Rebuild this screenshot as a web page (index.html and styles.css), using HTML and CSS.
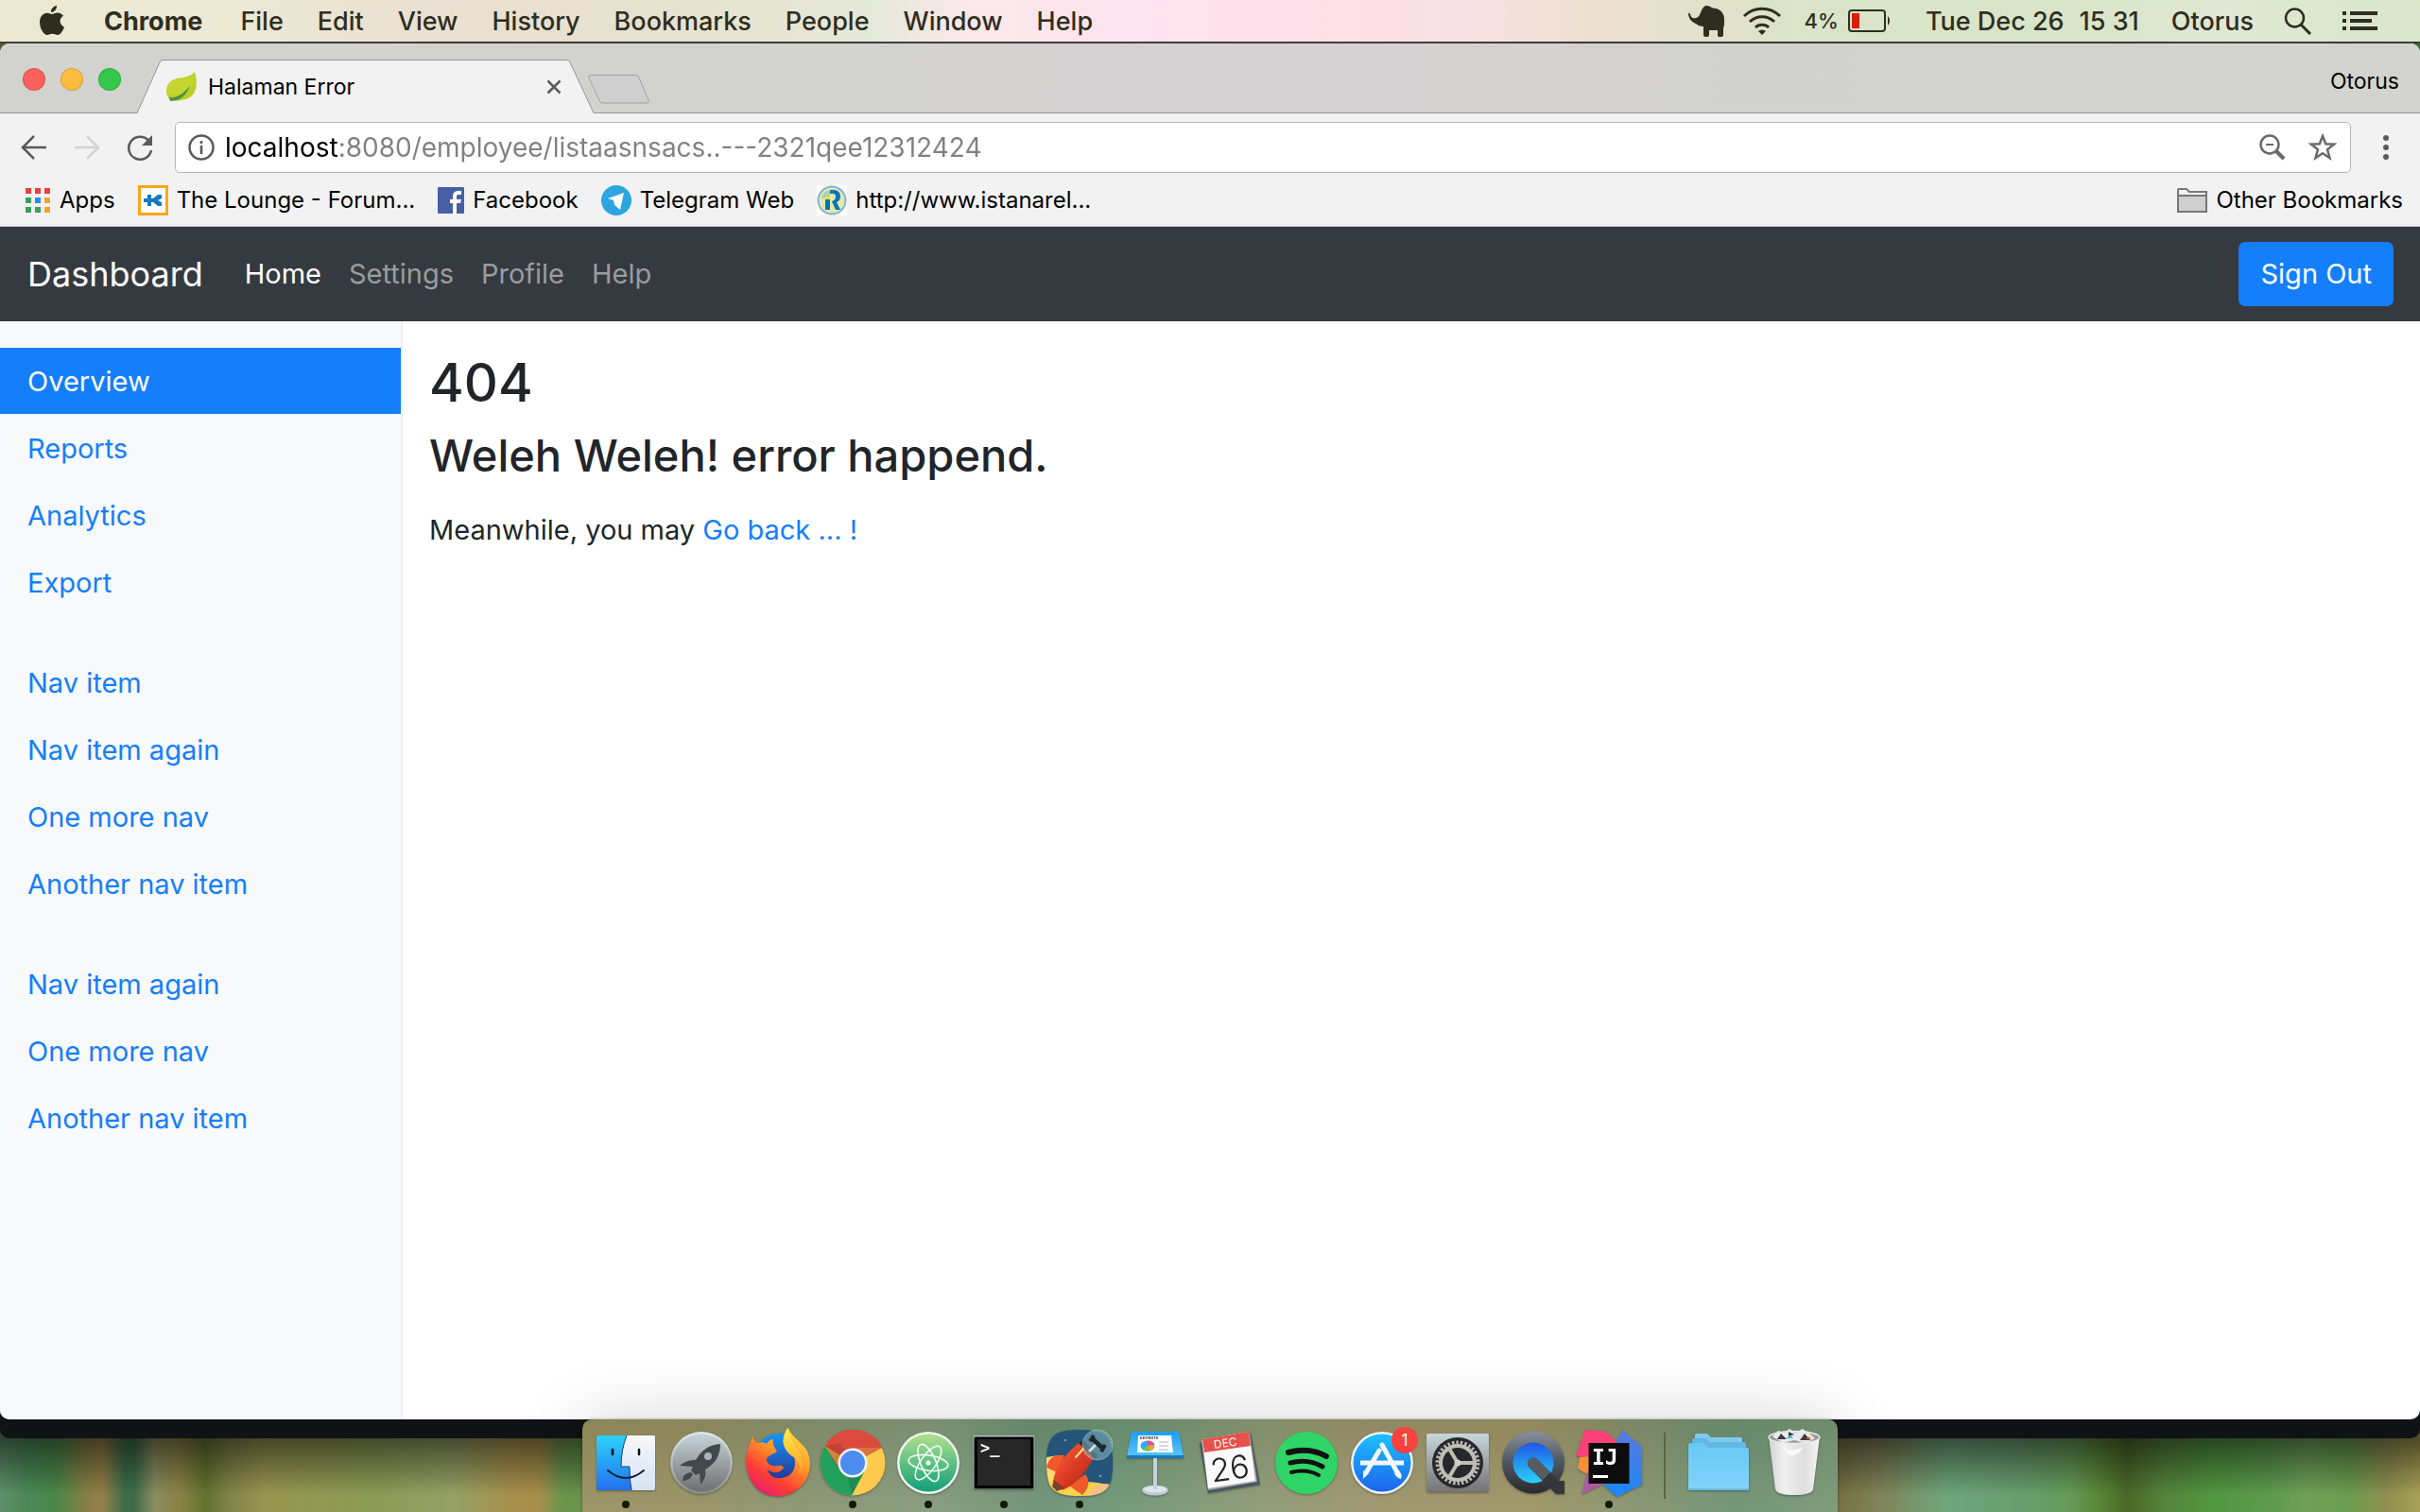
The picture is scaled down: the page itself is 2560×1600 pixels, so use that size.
FILE: index.html
```html
<!DOCTYPE html>
<html lang="en">
<head>
<meta charset="utf-8">
<title>Halaman Error</title>
<link rel="stylesheet" href="styles.css">
</head>
<body>
<div class="desktop">
  <header class="menubar">
    <nav class="menus" aria-label="Application menu">
      <button class="menu apple" aria-label="Apple"><svg width="28" height="34" viewBox="0 0 28 34"><path d="M19 1c.3 4-2.800 7-6 7C12.500 4.500 15.500 1.500 19 1zM14 10c1.500 0 3-1.500 6-1.500 2.500 0 4.800 1.300 6 3.300-5 3-4.300 9.500 1 11.700C25.500 27.500 23 32 20 32c-2 0-3-1.200-5.500-1.200S11 32 9 32C5 32 1 24.500 1 18.500 1 12 5 8.700 9 8.700c2.200 0 3.800 1.300 5 1.300z"/></svg></button>
      <button class="menu app-name">Chrome</button>
      <button class="menu">File</button>
      <button class="menu">Edit</button>
      <button class="menu">View</button>
      <button class="menu">History</button>
      <button class="menu">Bookmarks</button>
      <button class="menu">People</button>
      <button class="menu">Window</button>
      <button class="menu">Help</button>
    </nav>
    <div class="status">
      <svg class="elephant" width="40" height="34" viewBox="0 0 40 34"><path d="M1 9q1-1 2 1c1 4 3 5 6 4 4-1 4-4 6-8 2-5 5-6 9-4q3 2 6 2c6 1 9 6 9 12 0 5 0 7-1 9v7q0 2-2 2h-3q-1 0-1-2v-5h-9v5q0 2-2 2h-2q-2 0-2-2v-9c-3 0-6-1-8-3C4 18 1 14 1 9z"/></svg>
      <svg width="42" height="32" viewBox="0 0 42 32" fill="none" stroke="currentColor" stroke-width="3"><path d="M2 11a27 27 0 0 1 38 0M8 17a18.500 18.500 0 0 1 26 0M14 23a10 10 0 0 1 14 0"/><path d="M21 31l-4-4a6 6 0 0 1 8 0z" fill="currentColor" stroke="none"/></svg>
      <span class="battery"><span class="percent">4%</span>
      <svg width="46" height="26" viewBox="0 0 46 26"><rect x="1" y="2" width="38" height="22" rx="3" fill="none" stroke="currentColor" stroke-width="2"/><rect x="4" y="5" width="8" height="16" fill="#d81e05"/><path d="M42 8q4 5 0 10z"/></svg></span>
      <span class="clock"><span>Tue Dec 26</span><span>15 31</span></span>
      <span class="user">Otorus</span>
      <svg width="30" height="30" viewBox="0 0 30 30" fill="none" stroke="currentColor" stroke-width="2.500"><circle cx="11.500" cy="12" r="9.500"/><path d="M18 19l10 10" stroke-width="3"/></svg>
      <svg width="38" height="24" viewBox="0 0 38 24"><path d="M0 2h4v4H0zM8 2h29v4H8zM0 10h4v4H0zM8 10h23v4H8zM0 18h4v4H0zM8 18h29v4H8z"/></svg>
    </div>
  </header>

  <div class="workspace">
  <section class="window">
    <div class="titlebar">
      <div class="lights"><button class="light red" aria-label="Close window"></button><button class="light amber" aria-label="Minimise window"></button><button class="light green" aria-label="Zoom window"></button></div>
      <div class="tab">
        <svg class="tab-shape" width="486" height="57" viewBox="0 0 486 57"><path d="M0 56.500H1L25 3q1-2.500 4-2.500H455q3 0 4 2.500L484 56.500h2V57H0z" fill="#f2f2f2"/><path d="M0 56.500H1L25 3q1-2.500 4-2.500H455q3 0 4 2.500L484 56.500h2" fill="none" stroke="#949494"/></svg>
        <svg width="34" height="32" viewBox="0 0 34 32"><path d="M31 0c3 12 3 23-7 28-7 3-14 3-20 1C-2 20 1 10 12 7c8-1 15-2 19-7z" fill="#bccf22"/><path d="M30 4c1 8-3 15-10 18C14 25 8 25 3 23 0 14 5 9 13 8c8-1 13-1 17-4z" fill="#cbd936" opacity=".7"/><path d="M4 27c8 1 16-4 22-13-3 11-11 17-21 17z" fill="#4c9147"/></svg>
        <span class="tab-title">Halaman Error</span>
        <button class="tab-close" aria-label="Close tab"><svg width="16" height="16" viewBox="0 0 16 16"><path d="M1.500 1.500l13 13M14.500 1.500l-13 13" stroke="#5a5a5a" stroke-width="2.500"/></svg></button>
      </div>
      <button class="new-tab" aria-label="New tab"><svg width="66" height="32" viewBox="0 0 66 32"><path d="M4 .500h46q3 0 4 2.500l10 24q1 3-2 3H16q-3 0-4-2.500L1 3.500Q0 .500 4 .500z" fill="#cfcfcf" stroke="#a0a0a0"/></svg></button>
      <button class="profile">Otorus</button>
    </div>

    <div class="toolbar">
      <button class="tool" aria-label="Back"><svg width="28" height="28" viewBox="0 0 28 28" fill="none" stroke="#5a5a5a" stroke-width="2.500"><path d="M27 14H3M14 2L2 14l12 12"/></svg></button>
      <button class="tool" aria-label="Forward"><svg width="28" height="28" viewBox="0 0 28 28" fill="none" stroke="#d3d3d3" stroke-width="2.500"><path d="M1 14h24M14 2l12 12-12 12"/></svg></button>
      <button class="tool" aria-label="Reload"><svg width="28" height="28" viewBox="0 0 28 28" fill="none" stroke="#5a5a5a" stroke-width="2.500"><path d="M23 6.500A12 12 0 1 0 26 17"/><path d="M27 1v11H16z" fill="#5a5a5a" stroke="none"/></svg></button>
      <div class="omnibox">
        <svg width="28" height="28" viewBox="0 0 28 28"><circle cx="14" cy="14" r="12.500" fill="none" stroke="#5a5a5a" stroke-width="2.500"/><path d="M12.700 7h2.600v3h-2.600zM12.700 12h2.600v9h-2.600z" fill="#5a5a5a"/></svg>
        <input class="address" type="text" aria-label="Address" value="localhost:8080/employee/listaasnsacs..---2321qee12312424">
        <svg width="28" height="28" viewBox="0 0 28 28" fill="none" stroke="#6a6a6a" stroke-width="2.500"><circle cx="11" cy="11" r="9.500"/><path d="M17.500 17.500l8.500 8.500" stroke-width="4"/><path d="M7 11h8" stroke-width="2"/></svg>
        <svg width="30" height="30" viewBox="0 0 30 30"><path d="M15 3l3.200 8.300 8.800.400-7 5.500 2.500 9-7.500-5-7.500 5 2.500-9-7-5.500 8.800-.400z" fill="none" stroke="#6a6a6a" stroke-width="2.500"/></svg>
      </div>
      <button class="tool" aria-label="More"><svg width="8" height="28" viewBox="0 0 8 28" fill="#5a5a5a"><circle cx="4" cy="4" r="3"/><circle cx="4" cy="14" r="3"/><circle cx="4" cy="24" r="3"/></svg></button>
    </div>

    <nav class="bookmarks" aria-label="Bookmarks">
      <a class="bookmark" href="#"><svg width="28" height="28" viewBox="0 0 28 28"><path d="M1 1h6v6H1zM11 1h6v6h-6zM21 1h6v6h-6z" fill="#ef3f3b"/><path d="M1 11h6v6H1zM1 21h6v6H1zM11 21h6v6h-6z" fill="#38a05c"/><path d="M11 11h6v6h-6z" fill="#2a8cf3"/><path d="M21 11h6v6h-6zM21 21h6v6h-6z" fill="#f0a22b"/></svg>Apps</a>
      <a class="bookmark" href="#"><svg width="32" height="32" viewBox="0 0 32 32"><rect x="1.500" y="1.500" width="29" height="29" fill="#fff" stroke="#f9a61a" stroke-width="3"/><path d="M6 14h4v-4h4v4h2l5-4h4v4l-4 2 4 2v4h-4l-5-4h-2v4h-4v-4H6z" fill="#167ac2"/></svg>The Lounge - Forum...</a>
      <a class="bookmark" href="#"><svg width="28" height="28" viewBox="0 0 28 28"><rect width="28" height="28" rx="1" fill="#4760a5"/><path d="M16 28V17h-3v-4h3v-3c0-4 2-6 6-6h3v4h-3c-1.500 0-2 .500-2 2v3h5l-1 4h-4v11z" fill="#fff"/></svg>Facebook</a>
      <a class="bookmark" href="#"><svg width="32" height="32" viewBox="0 0 32 32"><circle cx="16" cy="16" r="16" fill="#2ca5e0"/><path d="M24 8l-4 18-6-5-1-5-6-2z" fill="#fff"/></svg>Telegram Web</a>
      <a class="bookmark" href="#"><svg width="32" height="32" viewBox="0 0 32 32"><rect width="32" height="32" fill="#fff"/><circle cx="16" cy="16" r="14.500" fill="#dfe9ae" stroke="#82b2d8" stroke-width="2"/><path d="M5 14a10 10 0 0 1 10-9l-2 9z" fill="#abd0b0"/><path d="M9 15h5v11H9z" fill="#0a73b5"/><path d="M9 12h5v3H9z" fill="#f5ec20"/><path d="M14 5h5q6 1 6 7 0 4-4 6l4 8h-5l-4-9q4-1 4-5 0-4-6-3z" fill="#0a73b5"/></svg>http://www.istanarel...</a>
      <a class="bookmark other" href="#"><svg width="32" height="26" viewBox="0 0 32 26"><path d="M1 25V2q0-1 1-1h8l3 3h18v21z" fill="#f2f2f2" stroke="#777" stroke-width="2"/><path d="M2 9h28v15H2z" fill="#cfcfcf"/><path d="M1 8h30" stroke="#777" stroke-width="2"/></svg>Other Bookmarks</a>
    </nav>

    <div class="page">
      <nav class="navbar" aria-label="Site">
        <a class="brand" href="#">Dashboard</a>
        <a class="nav-link current" href="#">Home</a>
        <a class="nav-link" href="#">Settings</a>
        <a class="nav-link" href="#">Profile</a>
        <a class="nav-link" href="#">Help</a>
        <button class="sign-out">Sign Out</button>
      </nav>
      <div class="page-body">
        <nav class="sidebar" aria-label="Sections">
          <ul class="side-group">
            <li><a class="side-link active" href="#">Overview</a></li>
            <li><a class="side-link" href="#">Reports</a></li>
            <li><a class="side-link" href="#">Analytics</a></li>
            <li><a class="side-link" href="#">Export</a></li>
          </ul>
          <ul class="side-group">
            <li><a class="side-link" href="#">Nav item</a></li>
            <li><a class="side-link" href="#">Nav item again</a></li>
            <li><a class="side-link" href="#">One more nav</a></li>
            <li><a class="side-link" href="#">Another nav item</a></li>
          </ul>
          <ul class="side-group">
            <li><a class="side-link" href="#">Nav item again</a></li>
            <li><a class="side-link" href="#">One more nav</a></li>
            <li><a class="side-link" href="#">Another nav item</a></li>
          </ul>
        </nav>
        <main class="content">
          <h1>404</h1>
          <h2>Weleh Weleh! error happend.</h2>
          <p>Meanwhile, you may <a href="#">Go back ... !</a></p>
        </main>
      </div>
    </div>
  </section>
  </div>

  <footer class="dock-strip">
    <nav class="dock" aria-label="Dock">
      <button class="dock-item running" aria-label="Finder"><svg viewBox="0 0 80 98"><defs><linearGradient id="fb" x2="0" y2="1"><stop stop-color="#2cd2fb"/><stop offset="1" stop-color="#2470ee"/></linearGradient><linearGradient id="fw" x2="0" y2="1"><stop stop-color="#f8f8fa"/><stop offset="1" stop-color="#d6e3f4"/></linearGradient></defs><rect x="9" y="17" width="62" height="58" rx="2" fill="url(#fb)"/><path d="M41 17h28q2 0 2 2v54q0 2-2 2H46q-2-10-2-25h-9q0-18 6-33z" fill="url(#fw)"/><path d="M41 17q-6 15-6 33h9q0 15 2 25" fill="none" stroke="#17406f" stroke-width="1"/><path d="M26 32v5M54 32v5" stroke="#111" stroke-width="2.500" stroke-linecap="round"/><path d="M21 54q19 16 38 0" fill="none" stroke="#0d2138" stroke-width="2" stroke-linecap="round"/></svg></button>
      <button class="dock-item" aria-label="Launchpad"><svg viewBox="0 0 80 98"><defs><linearGradient id="lp" x2="0" y2="1"><stop stop-color="#c5d3d9"/><stop offset="1" stop-color="#707070"/></linearGradient><linearGradient id="lr" x2="0" y2="1"><stop stop-color="#dcecf0"/><stop offset="1" stop-color="#8b8b8b"/></linearGradient></defs><circle cx="40" cy="46" r="33" fill="url(#lr)"/><circle cx="40" cy="46" r="30.500" fill="url(#lp)"/><path d="M60 26q-17 1-26 17-9-1-17 6l14 1-2 4 5 5 4-2 1 12q7-8 5-16 16-9 16-27zM29 56q-9 1-9 9 8 0 11-7z" fill="#43484c"/><circle cx="47" cy="39" r="4" fill="#aab3b7"/></svg></button>
      <button class="dock-item" aria-label="Firefox"><svg viewBox="0 0 80 98"><defs><linearGradient id="ff" x1=".8" y1="0" x2=".2" y2="1"><stop stop-color="#ffe24a"/><stop offset=".4" stop-color="#ff9428"/><stop offset=".72" stop-color="#ff3b36"/><stop offset="1" stop-color="#e01b79"/></linearGradient><linearGradient id="fg" x2="0" y2="1"><stop stop-color="#1396f8"/><stop offset="1" stop-color="#292a86"/></linearGradient><linearGradient id="fy" x2="0" y2="1"><stop stop-color="#fff04c"/><stop offset="1" stop-color="#ff9a24"/></linearGradient></defs><circle cx="42" cy="42" r="27" fill="url(#fg)"/><path d="M15 17q-1 5 4 8 7-2 10 1 3-5 7-5-1 5 1 8l3 5-7 4q-5 2-4 6 3 7 13 5 3-1 5 2-4 6-10 5-6-1-8-4 4 12 16 10 13-2 14-15 1-12-12-21-1-10 4-17 5 8 13 15 12 10 11 25-2 24-28 32-24 3-35-17-11-21 3-47z" fill="url(#ff)"/><path d="M52 9q-7 8-5 18 2 8 12 14 8 6 3 18 8-8 4-18-1-6-6-12-7-9-8-20z" fill="url(#fy)"/></svg></button>
      <button class="dock-item running" aria-label="Chrome"><svg viewBox="0 0 80 98"><circle cx="40" cy="46" r="34.500" fill="#fccb4d"/><path d="M40 46L10.500 28a34.500 34.500 0 0 1 60.800 2z" fill="#dc4a3d"/><path d="M10.500 28A34.500 34.500 0 0 0 39 80.500L53 54l-26-1z" fill="#23a05d"/><path d="M11 28l14 25 8-20-7-8z" fill="#a83a31" opacity=".5"/><path d="M40 30h31l-18 9z" fill="#d9a13a" opacity=".45"/><path d="M53 54L39 80l-4-19z" fill="#157a45" opacity=".5"/><circle cx="40" cy="46" r="15.500" fill="#f4f4f4"/><circle cx="40" cy="46" r="13" fill="#4c8bf0"/></svg></button>
      <button class="dock-item running" aria-label="Atom"><svg viewBox="0 0 80 98"><defs><linearGradient id="at" x2="0" y2="1"><stop stop-color="#b1e08e"/><stop offset="1" stop-color="#12a078"/></linearGradient></defs><circle cx="40" cy="46" r="33" fill="#f0f5ef"/><circle cx="40" cy="46" r="30.500" fill="url(#at)"/><g fill="none" stroke="#f2fff4" stroke-width="1.600"><ellipse cx="40" cy="46" rx="21" ry="8" transform="rotate(8 40 46)"/><ellipse cx="40" cy="46" rx="21" ry="8" transform="rotate(67 40 46)"/><ellipse cx="40" cy="46" rx="21" ry="8" transform="rotate(-55 40 46)"/></g><circle cx="40" cy="46" r="2.500" fill="#fff"/></svg></button>
      <button class="dock-item running" aria-label="Terminal"><svg viewBox="0 0 80 98"><rect x="7.500" y="17" width="65" height="57" rx="2" fill="#b9c2c6"/><rect x="8.500" y="18.500" width="63" height="55" rx="1" fill="#000"/><rect x="12" y="21" width="56" height="49" fill="#272727"/><text x="15" y="36" font-family="DejaVu Sans Mono" font-weight="bold" font-size="17" fill="#fff">&gt;_</text></svg></button>
      <button class="dock-item running" aria-label="Rocket"><svg viewBox="0 0 80 98"><defs><linearGradient id="rk" x1="0" y1="0" x2="1" y2="1"><stop stop-color="#ff6b38"/><stop offset=".5" stop-color="#dc3a24"/><stop offset="1" stop-color="#a82518"/></linearGradient><clipPath id="rc"><path d="M40 11c28 0 35 7 35 35s-7 35-35 35S5 74 5 46s7-35 35-35z"/></clipPath></defs><g clip-path="url(#rc)"><path d="M0 0h80v98H0z" fill="#245477"/><path d="M5 40l13-2 6 12L12 81H5z" fill="#fbd873"/><path d="M5 68q10-8 18-2 12 6 22 0 12 0 30 4v15H5z" fill="#fbd04c"/><path d="M52 74q8-8 23-5v15H50z" fill="#f6bf85"/><circle cx="25" cy="22" r="1" fill="#8cc"/><circle cx="62" cy="60" r="1" fill="#8cc"/><path d="M24 38Q8 36 5 51l11 5zM46 58q8 10-3 22l-14-10z" fill="#f0592b"/><path d="M12 66Q14 46 39 25l16 15Q42 66 22 75z" fill="url(#rk)"/><path d="M13 64l11 9-8 3-5-5z" fill="#754328"/><path d="M44 31l-8 9" stroke="#ffe08a" stroke-width="2" stroke-linecap="round"/></g><path d="M39 25l17 17 4-3-16-17z" fill="#25292d"/><circle cx="59" cy="27" r="16" fill="#8fc2cc" opacity=".5" stroke="#d6eef0"/><path d="M50 34l8-8" stroke="#d5dde0" stroke-width="3"/><path d="M53 20l12 11" stroke="#22272a" stroke-width="5"/><path d="M55 17l-4 6M67 27l-4 7" stroke="#22272a" stroke-width="4"/></svg></button>
      <button class="dock-item" aria-label="Keynote"><svg viewBox="0 0 80 98"><defs><linearGradient id="kn" x2="0" y2="1"><stop stop-color="#1c9df2"/><stop offset="1" stop-color="#56c4f7"/></linearGradient></defs><ellipse cx="40" cy="75" rx="14" ry="5.500" fill="#bccbd4"/><ellipse cx="40" cy="74" rx="12" ry="3.500" fill="#dde6ea"/><path d="M38 40h4v34h-4z" fill="#c6d2da"/><path d="M15 13h50l5 26H10z" fill="url(#kn)"/><path d="M10 38h60v3H10z" fill="#1779bd"/><path d="M22 17h35l2 18H21z" fill="#fff"/><text x="24" y="21" font-family="Inter" font-weight="700" font-size="4" fill="#333">KEYNOTE</text><ellipse cx="32" cy="28" rx="7.500" ry="5.500" fill="#36a9f4"/><path d="M32 28v-5.500a7.500 5.500 0 0 1 7 4z" fill="#f24a91"/><path d="M32 28l7-1q1 5-5 6z" fill="#f5a12c"/><path d="M32 28l2 5.500q-6 0-8-2z" fill="#6bcc49"/><path d="M44 24h10M44 28h10M44 32h10" stroke="#ccd" stroke-width="1.500"/></svg></button>
      <button class="dock-item" aria-label="Calendar"><svg viewBox="0 0 80 98"><path d="M7 25l54-10 10 54-55 9z" fill="#4a565e"/><path d="M9 22l51-6 8 50-52 9z" fill="#a6adb0"/><path d="M10 21l49-8 7 52-50 8z" fill="#fafafa"/><path d="M10 21l49-8 2 15-49 7z" fill="#e5524c"/><g transform="rotate(-8 38 45)" text-anchor="middle" font-family="Inter"><text x="37" y="29" font-size="12" fill="#fff">DEC</text><text x="38" y="64" font-size="34" font-weight="300" fill="#222">26</text></g></svg></button>
      <button class="dock-item" aria-label="Spotify"><svg viewBox="0 0 80 98"><circle cx="40" cy="46" r="33" fill="#2fd566"/><g fill="none" stroke="#111" stroke-linecap="round"><path d="M21 35q22-6 40 4" stroke-width="6"/><path d="M23 46q18-5 34 4" stroke-width="5"/><path d="M24 56q16-4 29 3" stroke-width="4"/></g></svg></button>
      <button class="dock-item" aria-label="App Store, 1 update"><svg viewBox="0 0 80 98"><defs><linearGradient id="as" x2="0" y2="1"><stop stop-color="#1cc1fc"/><stop offset="1" stop-color="#1d64ee"/></linearGradient></defs><circle cx="40" cy="46" r="33" fill="#eef3f7"/><circle cx="40" cy="46" r="30.500" fill="url(#as)"/><g stroke="#f2f5f9" fill="none"><path d="M17 46h46" stroke-width="5"/><path d="M37 33L24 55" stroke-width="5" stroke-linecap="round"/><path d="M40 27l16 29" stroke-width="5" stroke-linecap="round"/></g><path d="M20 54l6 3-6 6zM53 57l5-3q4 5 2 9-5-1-7-6z" fill="#f2f5f9"/></svg><span class="badge">1</span></button>
      <button class="dock-item" aria-label="System Preferences"><svg viewBox="0 0 80 98"><defs><linearGradient id="sp" x2="0" y2="1"><stop stop-color="#c8d7dc"/><stop offset="1" stop-color="#737373"/></linearGradient></defs><rect x="7" y="15" width="66" height="62" rx="2" fill="url(#sp)"/><circle cx="40" cy="46" r="27" fill="#26282a"/><circle cx="40" cy="46" r="21.500" fill="none" stroke="#b9b6b0" stroke-width="4" stroke-dasharray="2.500 2"/><circle cx="40" cy="46" r="18" fill="none" stroke="#c0bdb7" stroke-width="4"/><path d="M40 46h18M40 46L31 31M40 46l-9 15" stroke="#c0bdb7" stroke-width="4"/><circle cx="40" cy="46" r="3.500" fill="#d2d0cb"/></svg></button>
      <button class="dock-item" aria-label="QuickTime Player"><svg viewBox="0 0 80 98"><defs><linearGradient id="qt" x2="0" y2="1"><stop stop-color="#87909c"/><stop offset=".5" stop-color="#4d5661"/><stop offset="1" stop-color="#292a2c"/></linearGradient><linearGradient id="qb" x2="0" y2="1"><stop stop-color="#1f57e5"/><stop offset="1" stop-color="#2bd2fa"/></linearGradient></defs><circle cx="40" cy="45.500" r="33" fill="url(#qt)"/><circle cx="40" cy="46" r="21.500" fill="url(#qb)"/><path d="M36 51a6 6 0 0 1 8-9l23 23h6v14H64z" fill="#343639"/><path d="M36 51a6 6 0 0 1 8-9l14 14-8 8z" fill="#565c64"/></svg></button>
      <button class="dock-item running" aria-label="IntelliJ IDEA"><svg viewBox="0 0 80 98"><defs><linearGradient id="ib" x2="0" y2="1"><stop stop-color="#5a78dc"/><stop offset="1" stop-color="#1b87f7"/></linearGradient></defs><path d="M15 11l22 2 12 12-20 16-24-2z" fill="#fb3f79"/><path d="M9 40l12-1 1 22-15-9z" fill="#f78f39"/><path d="M20 47l30 14-39 18z" fill="#ae5ba4"/><path d="M54 11l21 18v40L48 82 34 69l14-46z" fill="url(#ib)"/><rect x="18.500" y="25" width="43" height="43" fill="#0d0d0d"/><text x="22" y="48" font-family="DejaVu Sans Mono" font-weight="bold" font-size="23" fill="#fff">IJ</text><path d="M23 59h16v3H23z" fill="#fff"/></svg></button>
      <span class="dock-divider"></span>
      <button class="dock-item" aria-label="Downloads"><svg viewBox="0 0 80 98"><defs><linearGradient id="fo" x2="0" y2="1"><stop stop-color="#69c8f3"/><stop offset="1" stop-color="#82d4fa"/></linearGradient></defs><path d="M15 17q0-2 2-2h11l4 4h31q2 0 2 2v20H15z" fill="#7dcbee"/><path d="M12 22q0-2 2-2h13l4 4h36q2 0 2 2v20H12z" fill="#62b9e3"/><path d="M8 27q0-2 2-2h14l5 5h41q2 0 2 2v43H8z" fill="url(#fo)"/><path d="M8 74h64" stroke="#4ea5d0"/></svg></button>
      <button class="dock-item" aria-label="Trash"><svg viewBox="0 0 80 98"><defs><linearGradient id="tr"><stop stop-color="#d2d2d2"/><stop offset=".3" stop-color="#f0f0f0"/><stop offset=".7" stop-color="#dedede"/><stop offset="1" stop-color="#f6f6f6"/></linearGradient></defs><path d="M13 18l7 56q2 6 20 6t20-6l7-56q-27 14-54 0z" fill="url(#tr)"/><ellipse cx="40" cy="19" rx="27" ry="6.500" fill="#9b9b9b" stroke="#ececec" stroke-width="1.500"/><path d="M17 18l6-6 6 2 6-4 6 4 8-4 6 4 7 6-10 5-12-3-12 3z" fill="#e9e9e9"/><path d="M22 21l4-6 6 6zM46 22l5-7 6 7zM34 13l6 3-6 2z" fill="#3a3a40"/><path d="M31 20l5-3 3 3z" fill="#43b7c4"/><path d="M52 21l3-3 3 3z" fill="#c8643c"/><path d="M24 27q12 10 26 2-8 12-16 8" fill="#fafafa"/></svg></button>
    </nav>
  </footer>
</div>
</body>
</html>
```
FILE: styles.css
```css
* { box-sizing: border-box; }

body {
  margin: 0;
  font-family: Inter, "Liberation Sans", sans-serif;
  color: #212529;
}

button {
  margin: 0;
  padding: 0;
  border: 0;
  background: none;
  font: inherit;
  color: inherit;
}

a { text-decoration: none; }
svg { display: block; flex: none; }

.desktop {
  display: flex;
  flex-direction: column;
  min-height: 100vh;
  background: linear-gradient(90deg, #5f5a3c, #3e6b34);
}

/* System menu bar */
.menubar {
  display: flex;
  justify-content: space-between;
  align-items: center;
  height: 46px;
  padding: 0 44px 0 41px;
  border-bottom: 2px solid #000b;
  background: linear-gradient(90deg, #ebe9d2 0%, #ece9d5 10%, #eae0d3 18%, #e6e2cf 28%, #e5e9da 36%, #fae7eb 40%, #fde4ee 46%, #ffdfe9 54%, #f8e1e5 60%, #efe0d4 65%, #e2e1cc 70%, #d9e4c8 76%, #d9e5c9 86%, #e1e8d5 92%, #d8e5cb 100%);
  color: #2e2d20;
  font-size: 27px;
  font-weight: 500;
  white-space: nowrap;
}
.menubar svg { fill: currentColor; }
.menubar svg[fill="none"] { fill: none; }
.menus, .status { display: flex; align-items: center; }
.menus { gap: 36px; }
.apple { margin-right: 5px; }
.app-name { margin-right: 4px; font-weight: 700; }
.status { gap: 32px; }
.elephant { margin-right: -14px; }
.battery { display: flex; align-items: center; gap: 10px; margin-left: -8px; }
.percent { font-size: 22px; }
.clock { display: flex; gap: 16px; margin: 0 2px 0 4px; }

/* Browser window */
.workspace {
  position: relative;
  flex: 1;
  display: flex;
}
.workspace::after {
  content: "";
  position: absolute;
  inset: auto 0 -20px;
  height: 60px;
  border-radius: 0 0 10px 10px;
  background: #101216;
}
.window {
  position: relative;
  z-index: 1;
  flex: 1;
  display: flex;
  flex-direction: column;
  overflow: hidden;
  border-radius: 10px;
  background: #fff;
}

.titlebar {
  display: flex;
  align-items: flex-end;
  height: 74px;
  padding: 0 22px 0 24px;
  border-bottom: 1px solid #949494;
  background: linear-gradient(90deg, #d2d3cf, #d2d3cf 36%, #d5d1d2 44%, #d5d1d2 58%, #d1d2ce 72%, #d3d3cf);
  color: #000;
  font-size: 23px;
}
.lights { display: flex; gap: 16px; padding-bottom: 23px; }
.light { width: 24px; height: 24px; border-radius: 50%; border: 1px solid #0002; }
.red { background: #fc605c; }
.amber { background: #fdbc40; }
.green { background: #34c84a; }
.tab {
  position: relative;
  display: flex;
  align-items: center;
  width: 486px;
  height: 57px;
  margin: 0 -8px -1px 16px;
  padding: 0 36px 0 31px;
}
.tab-shape { position: absolute; left: 0; top: 0; }
.tab > :not(.tab-shape) { position: relative; }
.tab-title { flex: 1; padding-left: 11px; }
.new-tab { margin-bottom: 8px; }
.profile { margin: 0 0 19px auto; }

.toolbar {
  display: flex;
  align-items: center;
  gap: 28px;
  height: 72px;
  padding: 0 32px 0 22px;
  background: #f2f2f2;
}
.omnibox {
  flex: 1;
  display: flex;
  align-items: center;
  gap: 24px;
  height: 54px;
  margin: 0 5px 0 -5px;
  padding: 0 14px 0 13px;
  border: 1px solid #b5b5b5;
  border-radius: 5px;
  background: #fff;
}
.address {
  flex: 1;
  min-width: 0;
  margin-left: -13px;
  padding: 0;
  border: 0;
  outline: 0;
  font: 28px/42px Inter, "Liberation Sans", sans-serif;
  color: #808080;
  background: linear-gradient(90deg, #000 122px, #808080 122px);
  -webkit-background-clip: text;
  background-clip: text;
  -webkit-text-fill-color: transparent;
}

.bookmarks {
  display: flex;
  align-items: center;
  gap: 24px;
  height: 48px;
  padding: 0 18px 8px 26px;
  border-bottom: 1px solid #c9c9c9;
  background: #f2f2f2;
  font-size: 24px;
  white-space: nowrap;
}
.bookmark { display: flex; align-items: center; gap: 9px; color: #000; }
.other { margin-left: auto; }

/* Web page */
.page { flex: 1; display: flex; flex-direction: column; font-size: 29px; line-height: 42px; }
.navbar {
  display: flex;
  align-items: center;
  gap: 29px;
  height: 100px;
  padding: 0 28px 0 29px;
  background: #343a40;
}
.brand { margin-right: 15px; color: #fff; font-size: 36px; }
.nav-link { color: #999c9f; }
.current { color: #fff; }
.sign-out {
  height: 68px;
  margin-left: auto;
  padding: 0 23px;
  border-radius: 7px;
  background: #147efb;
  color: #fff;
}
.page-body { flex: 1; display: flex; }
.sidebar {
  width: 426px;
  padding-top: 28px;
  border-right: 2px solid #eee;
  background: #f8f9fa;
}
.side-group {
  display: flex;
  flex-direction: column;
  gap: 1px;
  margin: 0 0 36px;
  padding: 0;
  list-style: none;
}
.side-link { display: block; padding: 15px 29px 13px; color: #147efb; }
.active { background: #147efb; color: #fff; }
.content { flex: 1; padding: 30px 28px; }
h1, h2 { margin: 0 0 12px; font-weight: 500; }
h1 { font-size: 56px; line-height: 70px; }
h2 { font-size: 47px; line-height: 60px; }
.content p { margin: 0; padding-top: 16px; }
.content a { color: #147efb; }

/* Wallpaper strip with the dock */
.dock-strip {
  display: flex;
  justify-content: center;
  height: 98px;
  background:
    linear-gradient(#0008 20px, #0000 80px),
    linear-gradient(90deg, #5f8f6a 0, #4a8856 30px, #4b8748 60px, #857f45 90px, #948048 108px, #3c6d48 132px, #3c6d48 142px, #8b8c60 164px, #8b8345 190px, #62722f 218px, #84854a 245px, #979650 280px, #8b9c56 400px, #95a065 480px, #a8904c 540px, #a8904c 570px, #6f9a50 594px, #6f9a50 616px, #7c7748 1944px, #80855a 1990px, #6fa67c 2060px, #6a9d72 2130px, #659a58 2190px, #5a8638 2220px, #4a6828 2250px, #54833c 2290px, #529640 2340px, #5d9a4e 2400px, #70a058 2440px, #6a9c4f 2485px, #908f50 2525px, #a8a055 2560px);
}
.dock {
  position: relative;
  z-index: 2;
  display: flex;
  padding: 0 6px;
  border-radius: 10px 10px 0 0;
  background:
    linear-gradient(#0001, #fff1),
    linear-gradient(90deg, #968f5e 0%, #958e60 8%, #87926e 18%, #829879 28%, #6c8f73 36%, #6d9474 43%, #8a9772 54%, #9a936a 62%, #9b9162 76%, #83916c 84%, #6d9072 92%, #789673 100%);
  box-shadow: 0 0 70px #0000002b, 0 0 3px #0006;
}
.dock-item { position: relative; width: 80px; height: 98px; }
.dock-item svg { width: 80px; height: 98px; filter: drop-shadow(0 1px 1px #0005); }
.running::after {
  content: "";
  position: absolute;
  left: 36px;
  bottom: 4px;
  width: 8px;
  height: 8px;
  border-radius: 50%;
  background: #131a04;
}
.badge {
  position: absolute;
  right: 2px;
  top: 8px;
  width: 28px;
  height: 28px;
  border-radius: 50%;
  background: #f8423d;
  color: #fff;
  font-size: 17px;
  line-height: 28px;
}
.dock-divider { width: 2px; height: 70px; margin: 14px 16px 0 18px; background: #59673f; }
```
